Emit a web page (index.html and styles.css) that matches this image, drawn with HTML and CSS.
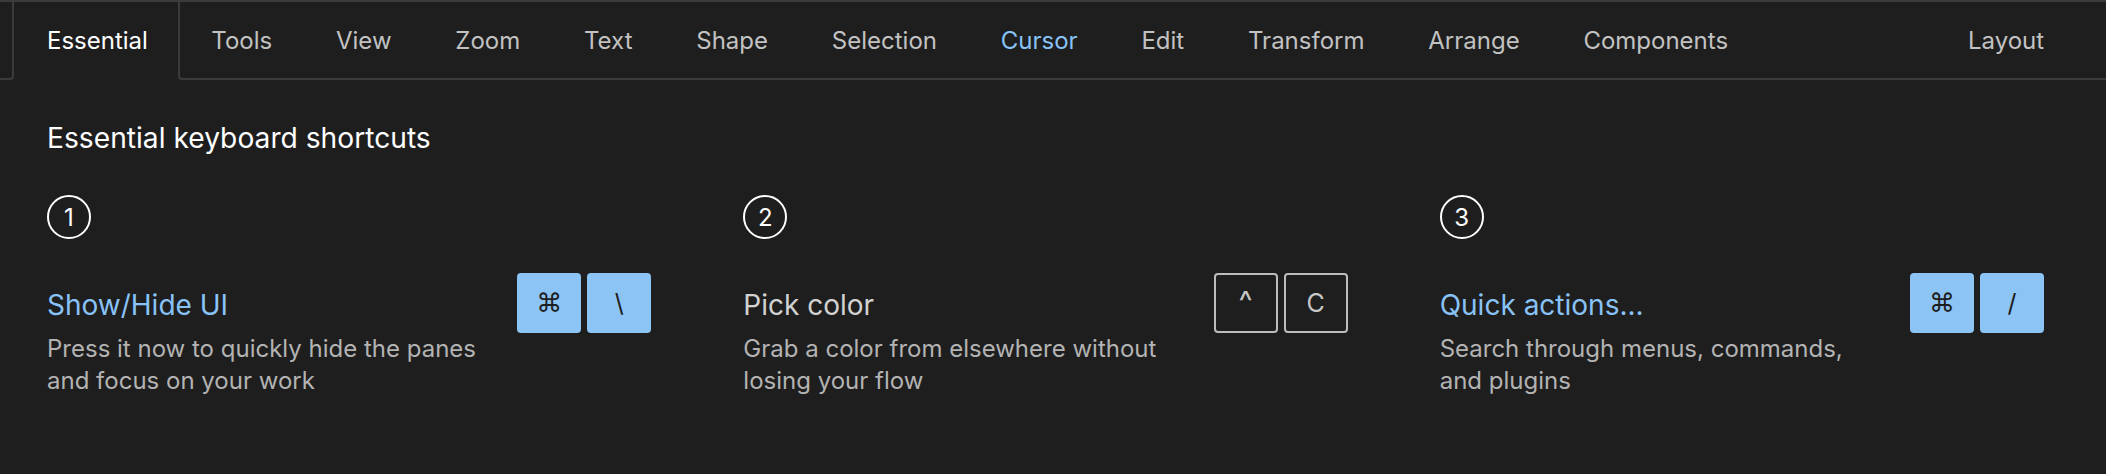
FILE: index.html
```html
<!DOCTYPE html>
<html lang="en">
<head>
<meta charset="utf-8">
<title>Keyboard shortcuts</title>
<link rel="stylesheet" href="styles.css">
</head>
<body>
<div class="panel">
  <nav class="tabbar">
    <div class="tab-lead"></div>
    <div class="tab tab-active">Essential</div>
    <div class="tab-rest">
      <div class="tab">Tools</div>
      <div class="tab">View</div>
      <div class="tab">Zoom</div>
      <div class="tab">Text</div>
      <div class="tab">Shape</div>
      <div class="tab">Selection</div>
      <div class="tab tab-hl">Cursor</div>
      <div class="tab">Edit</div>
      <div class="tab">Transform</div>
      <div class="tab">Arrange</div>
      <div class="tab">Components</div>
      <div class="tab tab-end">Layout</div>
    </div>
  </nav>
  <main class="content">
    <h1 class="heading">Essential keyboard shortcuts</h1>
    <div class="grid">
      <section class="step">
        <div class="num">1</div>
        <div class="item">
          <div class="title title-blue">Show/Hide UI</div>
          <div class="keys">
            <span class="key key-fill key-cmd">⌘</span>
            <span class="key key-fill">\</span>
          </div>
          <p class="desc">Press it now to quickly hide the panes and focus on your work</p>
        </div>
      </section>
      <section class="step">
        <div class="num">2</div>
        <div class="item">
          <div class="title">Pick color</div>
          <div class="keys">
            <span class="key key-line key-caret">^</span>
            <span class="key key-line">C</span>
          </div>
          <p class="desc">Grab a color from elsewhere without losing your flow</p>
        </div>
      </section>
      <section class="step">
        <div class="num">3</div>
        <div class="item">
          <div class="title title-blue">Quick actions...</div>
          <div class="keys">
            <span class="key key-fill key-cmd">⌘</span>
            <span class="key key-fill">/</span>
          </div>
          <p class="desc">Search through menus, commands, and plugins</p>
        </div>
      </section>
    </div>
  </main>
</div>
</body>
</html>
```

FILE: styles.css
```css
* { box-sizing: border-box; }
html, body {
  margin: 0;
  padding: 0;
  background: #1e1e1e;
}
body {
  font-family: Inter, "Noto Sans", sans-serif;
  color: #ffffff;
  width: 2106px;
  height: 474px;
  overflow: hidden;
}
.panel {
  width: 100%;
}
.tabbar {
  display: flex;
  height: 80px;
  border-top: 2px solid #3b3b3b;
}
.tab-lead {
  width: 14px;
  flex: none;
  border-right: 2px solid #3b3b3b;
  border-bottom: 2px solid #3b3b3b;
  border-bottom-right-radius: 4px;
}
.tab-rest {
  flex: 1;
  display: flex;
  align-items: center;
  padding-right: 30px;
  border-left: 2px solid #3b3b3b;
  border-bottom: 2px solid #3b3b3b;
  border-bottom-left-radius: 4px;
}
.tab {
  display: flex;
  align-items: center;
  height: 100%;
  padding: 0 31.9px;
  font-size: 24px;
  color: #c2c2c2;
  white-space: nowrap;
}
.tab-active {
  padding: 0 30px 0 33px;
  color: #ffffff;
  padding-bottom: 2px;
}
.tab-rest .tab:first-child { padding-left: 31.4px; }
.tab-hl { color: #88c2f6; }
.tab-end { margin-left: auto; }

.content {
  padding: 42px 62px 0 47px;
}
.heading {
  margin: 0;
  font-size: 28.2px;
  font-weight: 400;
  line-height: 32px;
  color: #ffffff;
}
.grid {
  display: grid;
  grid-template-columns: repeat(3, 1fr);
  column-gap: 92px;
  margin-top: 41px;
}
.num {
  width: 44px;
  height: 44px;
  border: 2px solid #ffffff;
  border-radius: 50%;
  display: flex;
  align-items: center;
  justify-content: center;
  font-size: 24px;
  color: #ffffff;
}
.item {
  display: grid;
  grid-template-columns: 1fr auto;
  column-gap: 30px;
  margin-top: 34px;
}
.title {
  grid-column: 1;
  grid-row: 1;
  align-self: center;
  font-size: 28px;
  line-height: 36px;
  color: #d2d2d2;
  padding-top: 4px;
}
.title-blue { color: #88c2f6; }
.keys {
  grid-column: 2;
  grid-row: 1;
  display: flex;
  gap: 6px;
}
.key {
  width: 64px;
  height: 60px;
  border-radius: 4px;
  display: flex;
  align-items: center;
  justify-content: center;
  font-size: 25px;
}
.key-fill {
  background: #8cc4f5;
  color: #1e1e1e;
}
.key-cmd {
  font-family: "DejaVu Sans", sans-serif;
  font-size: 26px;
}
.key-line {
  border: 2px solid #bcbcbc;
  color: #c8c8c8;
}
.key-caret {
  font-size: 30px;
  padding-bottom: 4px;
}
.desc {
  grid-column: 1;
  grid-row: 2;
  margin: 0;
  font-size: 24px;
  line-height: 32px;
  color: #b3b3b3;
}
```
